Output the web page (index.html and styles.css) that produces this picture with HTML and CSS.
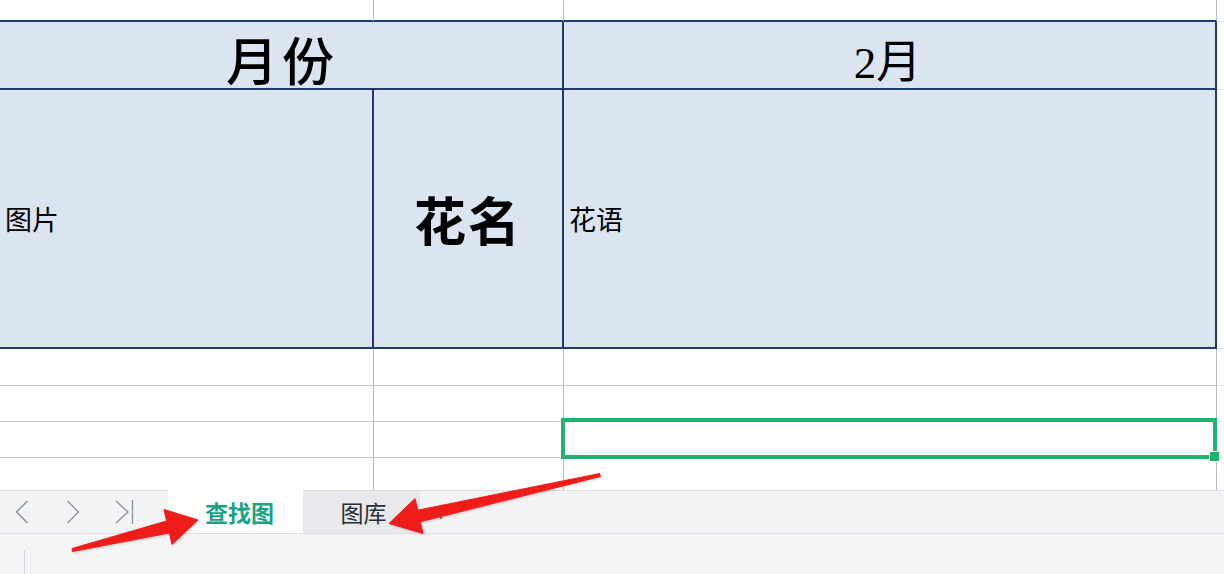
FILE: index.html
```html
<!DOCTYPE html>
<html lang="zh-CN">
<head>
<meta charset="utf-8">
<title>查找图</title>
<link rel="stylesheet" href="styles.css">
</head>
<body>
<div class="app">
  <div class="sheet">
    <div class="c top"></div>
    <div class="c top"></div>
    <div class="c top"></div>
    <div class="c edge"></div>

    <div class="c hdr span2 month">月份</div>
    <div class="c hdr center m2">2月</div>
    <div class="c edge"></div>

    <div class="c hdr left small">图片</div>
    <div class="c hdr center name">花名</div>
    <div class="c hdr left small">花语</div>
    <div class="c edge"></div>

    <div class="c"></div><div class="c"></div><div class="c"></div><div class="c edge"></div>
    <div class="c"></div><div class="c"></div><div class="c"></div><div class="c edge"></div>
    <div class="c"></div><div class="c"></div><div class="c sel-cell"><div class="sel"><div class="handle"></div></div></div><div class="c edge"></div>
    <div class="c last"></div><div class="c last"></div><div class="c last"></div><div class="c edge last"></div>
  </div>

  <div class="tabbar">
    <div class="nav">
      <svg class="navicon" viewBox="0 0 20 26" width="20" height="26"><polyline points="15.5,2 4.5,13 15.5,24"/></svg>
      <svg class="navicon" viewBox="0 0 20 26" width="20" height="26"><polyline points="4.5,2 15.5,13 4.5,24"/></svg>
      <svg class="navicon" viewBox="0 0 20 26" width="20" height="26"><polyline points="2,2 14,13 2,24"/><line x1="18.5" y1="1" x2="18.5" y2="25"/></svg>
    </div>
    <div class="tab active">查找图</div>
    <div class="tab">图库</div>
    <div class="add">
      <svg viewBox="0 0 20 26" width="20" height="26"><line x1="10" y1="6" x2="10" y2="20"/><line x1="3" y1="13" x2="17" y2="13"/></svg>
    </div>
    <div class="rest"></div>
  </div>

  <div class="status"><div class="sep"></div></div>

  <svg class="arrows" viewBox="0 0 1224 574" width="1224" height="574">
    <polygon points="72,548.5 166.6,521 164,509.5 198,520 172,544.5 169.4,533 72.4,551.5"/>
    <polygon points="599.7,473.5 417.7,510.2 415,498.5 389,523.5 423,533.5 420.3,521.8 600.3,476.5"/>
  </svg>
</div>
</body>
</html>
```

FILE: styles.css
```css
html, body {
  margin: 0;
  padding: 0;
  width: 1224px;
  height: 574px;
  overflow: hidden;
  background: #ffffff;
}

.app {
  position: relative;
  width: 1224px;
  height: 574px;
  font-family: "Noto Sans CJK SC", "Noto Sans", sans-serif;
}

.sheet {
  display: grid;
  grid-template-columns: 374px 190px 653px 7px;
  grid-template-rows: 22px 68px 259px 37px 36px 36px 32px;
  background: #ffffff;
}

.c {
  box-sizing: border-box;
  border-right: 1px solid #b3bccb;
  border-bottom: 1px solid #c3c7cc;
  background: #ffffff;
}

.c.top {
  border-bottom: 2px solid #1f3a6d;
}

.c.edge {
  border-right: none;
  border-bottom: 1px solid #e4e6e9;
}

.c.last {
  border-bottom: none;
}

.hdr {
  background: #dbe5f1;
  border-right: 2px solid #1f3a6d;
  border-bottom: 2px solid #1f3a6d;
  display: flex;
  align-items: center;
  color: #000000;
  white-space: nowrap;
}

.span2 {
  grid-column: span 2;
}

.center {
  justify-content: center;
}

.left {
  justify-content: flex-start;
  padding-left: 5px;
}

.month {
  justify-content: center;
  font-size: 52px;
  font-weight: 500;
  letter-spacing: 4px;
  padding-top: 6px;
  padding-left: 2px;
}

.m2 {
  font-family: "Liberation Serif", "Noto Sans CJK SC", serif;
  font-size: 45px;
  font-weight: 400;
  padding-top: 6px;
  padding-right: 4px;
}

.name {
  font-size: 52px;
  font-weight: 700;
  letter-spacing: 2px;
}

.small {
  font-size: 27px;
  font-weight: 400;
}

.sel-cell {
  position: relative;
}

.sel {
  position: absolute;
  left: -3px;
  top: -4px;
  right: -1px;
  bottom: -2px;
  border: 4px solid #1db46f;
}

.handle {
  position: absolute;
  right: -7px;
  bottom: -7px;
  width: 9px;
  height: 9px;
  background: #1db46f;
  border: 1px solid #ffffff;
}

.tabbar {
  box-sizing: border-box;
  height: 44px;
  display: flex;
  background: #f2f3f5;
  border-bottom: 1px solid #dcdfe3;
}

.nav {
  box-sizing: border-box;
  width: 168px;
  border-top: 1px solid #dcdfe3;
  display: flex;
  align-items: center;
  gap: 31px;
  padding-left: 12px;
}

.navicon polyline,
.navicon line {
  fill: none;
  stroke: #8a8e95;
  stroke-width: 1.3;
}

.tab {
  box-sizing: border-box;
  display: flex;
  align-items: center;
  justify-content: center;
  font-size: 23px;
  white-space: nowrap;
}

.tab.active {
  width: 135px;
  background: #ffffff;
  color: #1aa383;
  font-weight: 700;
  padding-left: 8px;
}

.tab:not(.active) {
  width: 117px;
  background: #e7e9ed;
  border-top: 1px solid #d7dade;
  color: #2b2f36;
  padding-left: 4px;
}

.add {
  box-sizing: border-box;
  width: 42px;
  display: flex;
  align-items: center;
  justify-content: center;
  border-top: 1px solid #dcdfe3;
}

.add line {
  stroke: #444a52;
  stroke-width: 1.4;
}

.rest {
  flex: 1;
  border-top: 1px solid #dcdfe3;
}

.status {
  box-sizing: border-box;
  height: 40px;
  background: #f3f4f6;
  padding-left: 24px;
  padding-top: 16px;
}

.sep {
  width: 1px;
  height: 24px;
  background: #d3d6da;
}

.arrows {
  position: absolute;
  left: 0;
  top: 0;
  pointer-events: none;
}

.arrows polygon {
  fill: #ef1d1a;
  stroke: #ef1d1a;
  stroke-width: 1;
  stroke-linejoin: round;
  filter: drop-shadow(1px 1px 1px rgba(0, 0, 0, 0.18));
}
```
